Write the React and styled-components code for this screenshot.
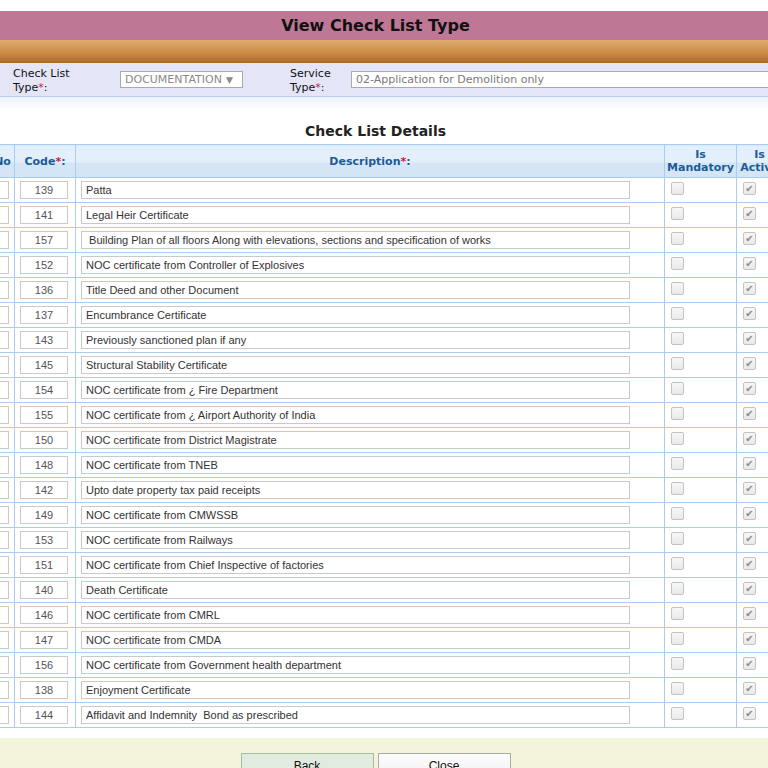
import React from "react";
import styled, { createGlobalStyle } from "styled-components";

const GlobalStyle = createGlobalStyle`
  body {
    margin: 0;
    overflow: hidden;
    background: #fff;
    font-family: "DejaVu Sans", Verdana, sans-serif;
  }
`;

const items = [
  ["139", "Patta"],
  ["141", "Legal Heir Certificate"],
  ["157", " Building Plan of all floors Along with elevations, sections and specification of works"],
  ["152", "NOC certificate from Controller of Explosives"],
  ["136", "Title Deed and other Document"],
  ["137", "Encumbrance Certificate"],
  ["143", "Previously sanctioned plan if any"],
  ["145", "Structural Stability Certificate"],
  ["154", "NOC certificate from \u00bf Fire Department"],
  ["155", "NOC certificate from \u00bf Airport Authority of India"],
  ["150", "NOC certificate from District Magistrate"],
  ["148", "NOC certificate from TNEB"],
  ["142", "Upto date property tax paid receipts"],
  ["149", "NOC certificate from CMWSSB"],
  ["153", "NOC certificate from Railways"],
  ["151", "NOC certificate from Chief Inspective of factories"],
  ["140", "Death Certificate"],
  ["146", "NOC certificate from CMRL"],
  ["147", "NOC certificate from CMDA"],
  ["156", "NOC certificate from Government health department"],
  ["138", "Enjoyment Certificate"],
  ["144", "Affidavit and Indemnity  Bond as prescribed"],
];

const Page = styled.div`
  padding-top: 11px;
`;

const TitleBar = styled.div`
  background: #be7795;
  height: 29px;
`;

const Title = styled.h1`
  margin: 0;
  width: 751px;
  text-align: center;
  font-size: 16px;
  line-height: 30px;
  font-weight: bold;
  color: #111;
`;

const OrangeBar = styled.div`
  height: 23px;
  background: linear-gradient(#dfab6e, #c98942 60%, #a8692b);
`;

const FilterRow = styled.div`
  height: 33px;
  background: #e5e5f8;
  display: flex;
  align-items: center;
  padding-left: 13px;
  border-bottom: 1px solid #b7cce6;
  white-space: nowrap;
`;

const Label = styled.div`
  width: ${({ w }) => w}px;
  margin-right: ${({ gap }) => gap}px;
  padding-top: 2px;
  white-space: normal;
  font-size: 11px;
  line-height: 14px;
  color: #111;
`;

const Star = styled.span`
  color: #d2163e;
`;

const Select = styled.div`
  height: 15px;
  width: 117px;
  border: 1px solid #a9a9a9;
  background: #fff;
  margin-right: 47px;
  padding: 0 0 0 4px;
  font-size: 11px;
  line-height: 16px;
  color: #8a8a8a;

  span {
    font-size: 9px;
    margin-left: 4px;
  }
`;

const TextBox = styled.div`
  flex: 1;
  height: 15px;
  border: 1px solid #a9a9a9;
  border-right: none;
  background: #fff;
  font-size: 11px;
  line-height: 16px;
  color: #7a7a7a;
  padding-left: 4px;
`;

const Fade = styled.div`
  height: 13px;
  background: linear-gradient(#e9f2fb, #fff);
`;

const SectionTitle = styled.h2`
  margin: 0;
  width: 751px;
  text-align: center;
  font-size: 14px;
  line-height: 17px;
  padding: 13px 0 4px;
  color: #222;
`;

const TableWrap = styled.div`
  overflow: hidden;
`;

const Table = styled.table`
  border-collapse: collapse;
  table-layout: fixed;
  margin-left: -22px;
  width: 804px;
`;

const Th = styled.th`
  border: 1px solid #a9cdee;
  background: linear-gradient(#e3effb 52%, #d4e6f6 52%);
  color: #1c5b96;
  font-size: 11px;
  line-height: 13px;
  height: 32px;
  padding: 0 2px;
  text-align: center;
  vertical-align: middle;
`;

const Td = styled.td`
  border: 1px solid #a9cdee;
  height: 24px;
  padding: 0 5px;
  vertical-align: middle;
`;

const CheckTd = styled(Td)`
  padding: 0 2px;
  line-height: 0;
`;

const Field = styled.input`
  display: block;
  box-sizing: border-box;
  width: ${({ w }) => w}px;
  height: 18px;
  border: 1px solid #c9c9c9;
  background: #fff;
  padding: 0 4px;
  font-family: "Liberation Sans", Arial, sans-serif;
  font-size: 11px;
  color: ${({ center }) => (center ? "#555" : "#333")};
  text-align: ${({ center }) => (center ? "center" : "left")};
  outline: none;
`;

const CheckBox = styled.span`
  display: inline-block;
  box-sizing: border-box;
  width: 13px;
  height: 13px;
  margin: 0 0 3px 4px;
  border: 1px solid #c3c3c3;
  border-radius: 2px;
  background: linear-gradient(#f7f7f7, #e9e9e9);
  color: #8c8c8c;
  font-size: 10px;
  line-height: 11px;
  text-align: center;
  vertical-align: middle;
`;

const Footer = styled.div`
  margin-top: 10px;
  background: #f4f4dc;
  height: 40px;
  padding-top: 15px;
`;

const ButtonRow = styled.div`
  width: 751px;
  display: flex;
  justify-content: center;
  gap: 4px;
`;

const Button = styled.button`
  width: 133px;
  height: 26px;
  border: 1px solid ${({ primary }) => (primary ? "#a3bf9a" : "#aaa")};
  background: ${({ primary }) =>
    primary ? "#e2ebdf" : "linear-gradient(#fdfdfd, #f0f0f0)"};
  font-family: "Liberation Sans", Arial, sans-serif;
  font-size: 12px;
  color: #111;
  padding: 0;
`;

const Check = ({ checked }) => (
  <CheckBox role="checkbox" aria-checked={!!checked} aria-disabled="true">
    {checked ? "\u2714" : ""}
  </CheckBox>
);

export default function App() {
  return (
    <>
      <GlobalStyle />
      <Page>
        <TitleBar>
          <Title>View Check List Type</Title>
        </TitleBar>
        <OrangeBar />
        <FilterRow>
          <Label w={62} gap={45}>
            Check List Type<Star>*</Star>:
          </Label>
          <Select>
            DOCUMENTATION<span>▼</span>
          </Select>
          <Label w={50} gap={11}>
            Service Type<Star>*</Star>:
          </Label>
          <TextBox>02-Application for Demolition only</TextBox>
        </FilterRow>
        <Fade />
        <SectionTitle>Check List Details</SectionTitle>
        <TableWrap>
          <Table>
            <colgroup>
              <col style={{ width: 36 }} />
              <col style={{ width: 61 }} />
              <col style={{ width: 589 }} />
              <col style={{ width: 72 }} />
              <col style={{ width: 46 }} />
            </colgroup>
            <thead>
              <tr>
                <Th>S.No</Th>
                <Th>
                  Code<Star>*</Star>:
                </Th>
                <Th>
                  Description<Star>*</Star>:
                </Th>
                <Th>
                  Is
                  <br />
                  Mandatory
                </Th>
                <Th>
                  Is
                  <br />
                  Active
                </Th>
              </tr>
            </thead>
            <tbody>
              {items.map(([code, desc]) => (
                <tr key={code}>
                  <Td>
                    <Field w={25} center readOnly value="" />
                  </Td>
                  <Td>
                    <Field w={48} center readOnly value={code} />
                  </Td>
                  <Td>
                    <Field w={549} readOnly value={desc} />
                  </Td>
                  <CheckTd>
                    <Check />
                  </CheckTd>
                  <CheckTd>
                    <Check checked />
                  </CheckTd>
                </tr>
              ))}
            </tbody>
          </Table>
        </TableWrap>
        <Footer>
          <ButtonRow>
            <Button primary>Back</Button>
            <Button>Close</Button>
          </ButtonRow>
        </Footer>
      </Page>
    </>
  );
}
